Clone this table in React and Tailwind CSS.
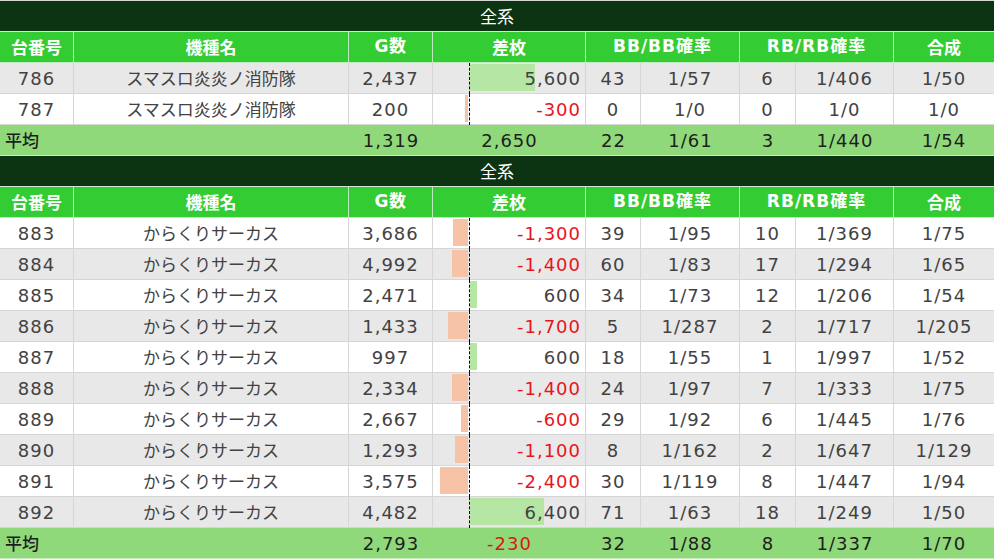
import React from "react";

const COLS = "grid grid-cols-[74px_275px_84px_153px_55px_99px_56px_98px_100px]";
const SCALE = 0.01157;

const t1 = {
  rows: [
    ["786", "スマスロ炎炎ノ消防隊", "2,437", 5600, "43", "1/57", "6", "1/406", "1/50", true],
    ["787", "スマスロ炎炎ノ消防隊", "200", -300, "0", "1/0", "0", "1/0", "1/0", false],
  ],
  avg: ["1,319", 2650, "22", "1/61", "3", "1/440", "1/54"],
};

const t2 = {
  rows: [
    ["883", "からくりサーカス", "3,686", -1300, "39", "1/95", "10", "1/369", "1/75", false],
    ["884", "からくりサーカス", "4,992", -1400, "60", "1/83", "17", "1/294", "1/65", true],
    ["885", "からくりサーカス", "2,471", 600, "34", "1/73", "12", "1/206", "1/54", false],
    ["886", "からくりサーカス", "1,433", -1700, "5", "1/287", "2", "1/717", "1/205", true],
    ["887", "からくりサーカス", "997", 600, "18", "1/55", "1", "1/997", "1/52", false],
    ["888", "からくりサーカス", "2,334", -1400, "24", "1/97", "7", "1/333", "1/75", true],
    ["889", "からくりサーカス", "2,667", -600, "29", "1/92", "6", "1/445", "1/76", false],
    ["890", "からくりサーカス", "1,293", -1100, "8", "1/162", "2", "1/647", "1/129", true],
    ["891", "からくりサーカス", "3,575", -2400, "30", "1/119", "8", "1/447", "1/94", false],
    ["892", "からくりサーカス", "4,482", 6400, "71", "1/63", "18", "1/249", "1/50", true],
  ],
  avg: ["2,793", -230, "32", "1/88", "8", "1/337", "1/70"],
};

const fmt = (v) => v.toLocaleString("en-US");

function Cell({ children, className = "" }) {
  return (
    <div
      className={`h-[31px] border-r border-b border-[#d6d6d6] flex items-center justify-center ${className}`}
    >
      {children}
    </div>
  );
}

const NUM = "text-[18px] text-[#424242] tracking-[1px]";
const JP = "font-['Noto_Sans_CJK_JP',sans-serif] text-[17px] text-[#424242]";

function DiffCell({ v }) {
  const w = Math.abs(v) * SCALE;
  return (
    <div className={`relative h-[31px] border-r border-b border-[#d6d6d6] flex items-center justify-end pr-[4px] ${NUM}`}>
      {v > 0 ? (
        <div className="absolute left-[37px] top-[1px] h-[27px] bg-[#b6e6a3]" style={{ width: w }} />
      ) : (
        <div className="absolute right-[117px] top-[1px] h-[27px] bg-[#f6c3a6]" style={{ width: w }} />
      )}
      <div className="absolute left-[36px] top-0 -bottom-px border-l border-dashed border-black" />
      <span className={`relative ${v < 0 ? "text-[#e8141c]" : ""}`}>{fmt(v)}</span>
    </div>
  );
}

function Table({ data }) {
  return (
    <div>
      <div className={`h-[31px] bg-[#0c3413] border-b border-[#cfe8cf] flex items-center justify-center text-white text-[17px] font-['Noto_Sans_CJK_JP',sans-serif]`}>
        全系
      </div>
      <div className={`${COLS} bg-[#33cc33] text-white font-bold text-[17px]`}>
        {[
          ["台番号", "font-['Noto_Sans_CJK_JP',sans-serif]"],
          ["機種名", "font-['Noto_Sans_CJK_JP',sans-serif]"],
          ["G数", "tracking-[0.5px]"],
          ["差枚", "font-['Noto_Sans_CJK_JP',sans-serif]"],
          ["BB/BB確率", "col-span-2 tracking-[1px]"],
          ["RB/RB確率", "col-span-2 tracking-[1px]"],
          ["合成", "font-['Noto_Sans_CJK_JP',sans-serif] border-r-0"],
        ].map(([t, c]) => (
          <div
            key={t}
            className={`h-[31px] border-r border-b border-[#bfe9bf] flex items-center justify-center ${c}`}
          >
            {t}
          </div>
        ))}
      </div>
      {data.rows.map((r) => (
        <div key={r[0]} className={`${COLS} ${r[9] ? "bg-[#e8e8e8]" : "bg-white"}`}>
          <Cell className={NUM}>{r[0]}</Cell>
          <Cell className={JP}>{r[1]}</Cell>
          <Cell className={NUM}>{r[2]}</Cell>
          <DiffCell v={r[3]} />
          <Cell className={NUM}>{r[4]}</Cell>
          <Cell className={NUM}>{r[5]}</Cell>
          <Cell className={NUM}>{r[6]}</Cell>
          <Cell className={NUM}>{r[7]}</Cell>
          <Cell className={`${NUM} border-r-0`}>{r[8]}</Cell>
        </div>
      ))}
      <div className={`${COLS} bg-[#8fd97a] h-[31px] border-b border-[#c9ecbd] text-[18px] text-[#1e1e1e] tracking-[1px]`}>
        <div className="col-span-2 flex items-center pl-[5px] text-[17px] font-medium tracking-normal font-['Noto_Sans_CJK_JP',sans-serif]">
          平均
        </div>
        <div className="flex items-center justify-center">{data.avg[0]}</div>
        <div className={`flex items-center justify-center ${data.avg[1] < 0 ? "text-[#d91a10]" : ""}`}>
          {fmt(data.avg[1])}
        </div>
        {data.avg.slice(2).map((v, i) => (
          <div key={i} className="flex items-center justify-center">
            {v}
          </div>
        ))}
      </div>
    </div>
  );
}

export default function App() {
  return (
    <div className="w-[994px] h-[559px] overflow-hidden bg-white border-t border-[#d6d6d6] font-['DejaVu_Sans','Noto_Sans_CJK_JP',sans-serif]">
      <Table data={t1} />
      <Table data={t2} />
    </div>
  );
}
